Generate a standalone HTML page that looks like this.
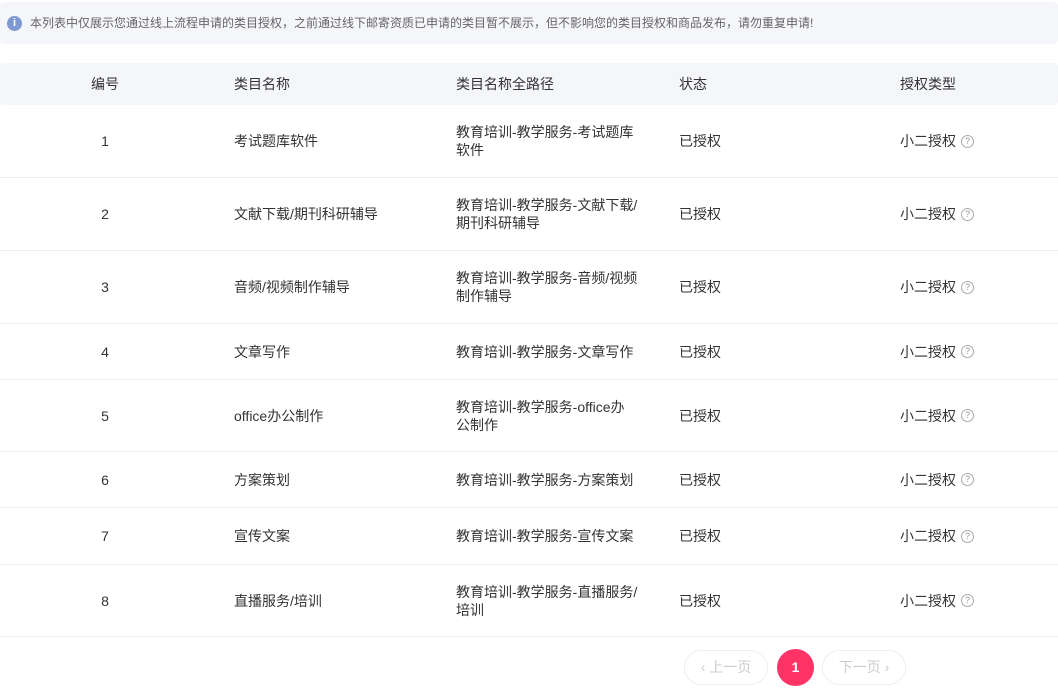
<!DOCTYPE html>
<html><head><meta charset="utf-8"><style>
*{margin:0;padding:0;box-sizing:border-box}
body{width:1058px;height:690px;background:#fff;font-family:"Liberation Sans","Noto Sans CJK SC",sans-serif;font-size:14px;color:#333;position:relative;overflow:hidden}
.notice{position:absolute;left:0;top:2px;width:1058px;height:42px;background:#f5f6fa;border-radius:4px;font-size:12px;color:#666;line-height:42px;padding-left:30px}
.notice i{position:absolute;left:7px;top:14px;width:15px;height:15px;border-radius:50%;background:#7f9ad2;color:#fff;font-style:normal;font-size:11px;line-height:15px;text-align:center;font-weight:bold}
.hd{position:absolute;left:0;top:63px;width:1058px;height:42px;background:#f5f6fa;border-radius:4px}
.row{position:absolute;left:0;width:1058px;border-bottom:1px solid #eeeff2}
.row div,.hd div{position:absolute;top:0;height:100%;display:flex;align-items:center;line-height:18px}
.c0{left:60px;width:90px;justify-content:center}
.c1{left:234px}
.c2{left:456px;width:192px}
.c3{left:679px}
.c4{left:900px}
.q{display:inline-block;width:13px;height:13px;border:1px solid #aaa;border-radius:50%;font-size:9px;line-height:11px;text-align:center;color:#999;margin-left:5px}
.btn{position:absolute;top:650px;height:35px;width:84px;border:1px solid #eee;border-radius:18px;color:#ccc;font-size:14px;text-align:center;line-height:33px}
.pg{position:absolute;left:777px;top:649px;width:37px;height:37px;border-radius:50%;background:#ff3366;color:#fff;text-align:center;line-height:37px;font-weight:bold}
</style></head><body>
<div class="notice"><i>i</i>本列表中仅展示您通过线上流程申请的类目授权，之前通过线下邮寄资质已申请的类目暂不展示，但不影响您的类目授权和商品发布，请勿重复申请!</div>
<div class="hd"><div class="c0">编号</div><div class="c1">类目名称</div><div class="c2">类目名称全路径</div><div class="c3">状态</div><div class="c4">授权类型</div></div>
<div class="row" style="top:105px;height:73px"><div class="c0">1</div><div class="c1">考试题库软件</div><div class="c2">教育培训-教学服务-考试题库<br>软件</div><div class="c3">已授权</div><div class="c4">小二授权<span class="q">?</span></div></div>
<div class="row" style="top:178px;height:73px"><div class="c0">2</div><div class="c1">文献下载/期刊科研辅导</div><div class="c2">教育培训-教学服务-文献下载/<br>期刊科研辅导</div><div class="c3">已授权</div><div class="c4">小二授权<span class="q">?</span></div></div>
<div class="row" style="top:251px;height:73px"><div class="c0">3</div><div class="c1">音频/视频制作辅导</div><div class="c2">教育培训-教学服务-音频/视频<br>制作辅导</div><div class="c3">已授权</div><div class="c4">小二授权<span class="q">?</span></div></div>
<div class="row" style="top:324px;height:56px"><div class="c0">4</div><div class="c1">文章写作</div><div class="c2">教育培训-教学服务-文章写作</div><div class="c3">已授权</div><div class="c4">小二授权<span class="q">?</span></div></div>
<div class="row" style="top:380px;height:72px"><div class="c0">5</div><div class="c1">office办公制作</div><div class="c2">教育培训-教学服务-office办<br>公制作</div><div class="c3">已授权</div><div class="c4">小二授权<span class="q">?</span></div></div>
<div class="row" style="top:452px;height:56px"><div class="c0">6</div><div class="c1">方案策划</div><div class="c2">教育培训-教学服务-方案策划</div><div class="c3">已授权</div><div class="c4">小二授权<span class="q">?</span></div></div>
<div class="row" style="top:508px;height:57px"><div class="c0">7</div><div class="c1">宣传文案</div><div class="c2">教育培训-教学服务-宣传文案</div><div class="c3">已授权</div><div class="c4">小二授权<span class="q">?</span></div></div>
<div class="row" style="top:565px;height:72px"><div class="c0">8</div><div class="c1">直播服务/培训</div><div class="c2">教育培训-教学服务-直播服务/<br>培训</div><div class="c3">已授权</div><div class="c4">小二授权<span class="q">?</span></div></div>
<div class="btn" style="left:684px">‹ 上一页</div>
<div class="pg">1</div>
<div class="btn" style="left:822px">下一页 ›</div>
</body></html>
